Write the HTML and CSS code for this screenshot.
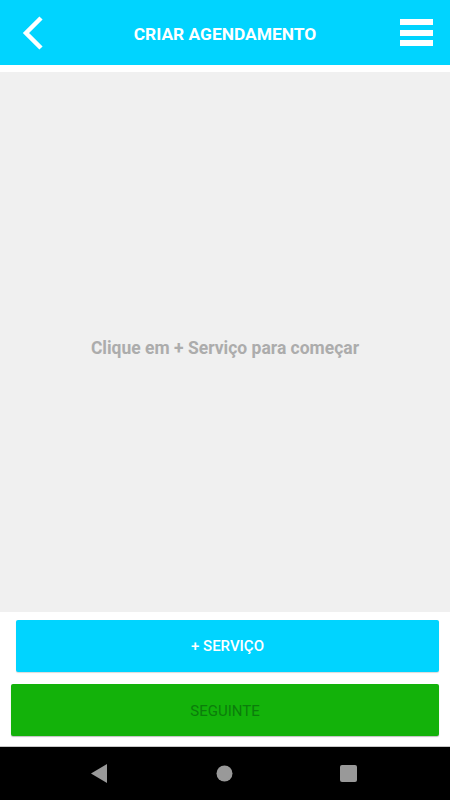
FILE: index.html
```html
<!DOCTYPE html>
<html>
<head>
    <title>Criar Agendamento</title>
    <link rel="stylesheet" href="styles.css">
</head>
<body>
    <div class="screen">
        <div class="topbar">
            <svg class="back" width="22" height="34" viewBox="0 0 22 34">
                <polyline points="19,2 4,17 19,32" fill="none" stroke="#fff" stroke-width="4.5"/>
            </svg>
            <div class="title">CRIAR AGENDAMENTO</div>
            <div class="menu">
                <span></span><span></span><span></span>
            </div>
        </div>

        <div class="content">
            <div class="empty">Clique em + Serviço para começar</div>
        </div>

        <div class="actions">
            <button class="btn-service">+ SERVIÇO</button>
            <button class="btn-next">SEGUINTE</button>
        </div>

        <div class="navbar">
            <svg width="17" height="19" viewBox="0 0 17 19"><polygon points="16,0 16,19 0,9.5" fill="#999"/></svg>
            <svg width="17" height="17" viewBox="0 0 17 17"><circle cx="8.5" cy="8.5" r="8" fill="#999"/></svg>
            <svg width="17" height="17" viewBox="0 0 17 17"><rect x="0" y="0" width="17" height="17" rx="2" fill="#999"/></svg>
        </div>
    </div>
</body>
</html>
```

FILE: styles.css
```css
body {
    margin: 0;
    font-family: Roboto, "Liberation Sans", sans-serif;
}
.screen {
    display: flex;
    flex-direction: column;
    height: 800px;
    background: #fff;
}
.topbar {
    height: 65px;
    background: #00d4ff;
    display: flex;
    align-items: center;
    padding: 0 17px 0 22px;
    flex-shrink: 0;
}
.back {
    display: block;
}
.title {
    flex: 1;
    text-align: center;
    color: #fff;
    font-weight: bold;
    font-size: 17.4px;
    margin: 2px 0 0 6px;
}
.menu {
    display: flex;
    flex-direction: column;
    gap: 4.5px;
    width: 33px;
}
.menu span {
    display: block;
    height: 6px;
    background: #fff;
}
.content {
    margin-top: 7px;
    flex: 1;
    background: #f0f0f0;
    display: flex;
    align-items: center;
    justify-content: center;
}
.empty {
    color: #acacac;
    font-weight: bold;
    font-size: 17.5px;
    margin-top: 12px;
}
.actions {
    display: flex;
    flex-direction: column;
    padding: 8px 11px 10px 11px;
    gap: 12px;
    flex-shrink: 0;
}
.actions button {
    height: 52px;
    border: none;
    border-radius: 2px;
    font-family: Roboto, "Liberation Sans", sans-serif;
    font-size: 15px;
}
.btn-service {
    margin-left: 5px;
    background: #00d4ff;
    color: #fff;
    font-weight: 500;
    box-shadow: 0 1px 1px rgba(0, 0, 0, 0.15);
}
.btn-next {
    background: #13b20a;
    color: #0b7d0b;
    font-size: 15.5px;
    padding-top: 3px;
    box-shadow: 0 1px 1px rgba(0, 0, 0, 0.25);
}
.navbar {
    height: 53px;
    background: #000;
    border-top: 1px solid #c8c8c8;
    display: flex;
    align-items: center;
    justify-content: space-between;
    padding: 0 93px 0 91px;
    flex-shrink: 0;
}
.navbar svg {
    display: block;
}
```
